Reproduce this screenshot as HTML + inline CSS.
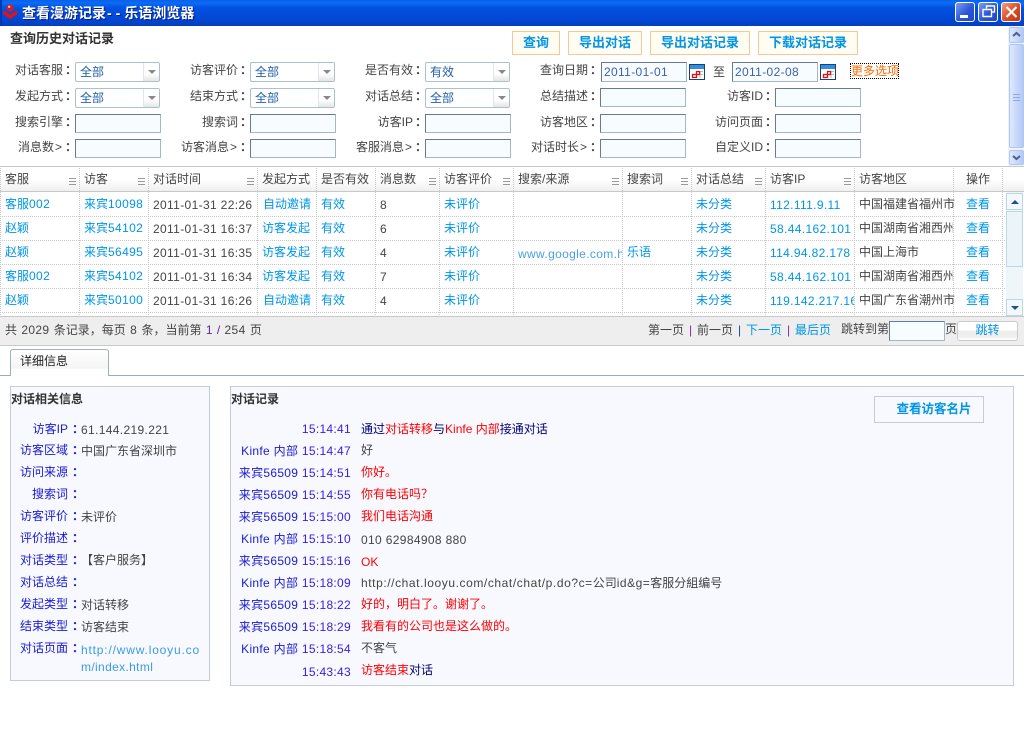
<!DOCTYPE html>
<html lang="zh-CN"><head><meta charset="utf-8"><title>查看漫游记录--乐语浏览器</title>
<style>
html,body{margin:0;padding:0;background:#fff}
#p{position:relative;width:1024px;height:738px;overflow:hidden;background:#fff;font:12px/16px "Liberation Sans","WenQuanYi Zen Hei","Noto Sans CJK SC",sans-serif;color:#444}
#p div,#p span.a{position:absolute}
.t{white-space:nowrap;height:16px}
.r{text-align:right}
.n{letter-spacing:.35px}
.l{color:#0095e6}
.d{color:#444}
.bl{color:#1a1ad0}
.tm{color:#3a1ae0;letter-spacing:.3px}
.red{color:#f00}
.nv{color:#00007a}
.h{color:#444}
.c{display:inline-block;width:9px;text-indent:2px;text-align:left;font-weight:bold}
.c2{display:inline-block;width:9px;text-indent:4px;text-align:left;font-weight:bold}
.g{display:inline-block;width:9px;text-align:center}
.sel{width:83px;height:18px;border:1px solid #a9c3c9;border-radius:2px;background:#fff}
.sel i{position:absolute;left:4px;top:1px;font-style:normal;color:#1f5fa8;line-height:16px}
.sel b{position:absolute;right:0;top:0;width:15px;height:18px;border-left:1px solid #dde6e8;background:linear-gradient(#fff,#fff 60%,#e4e4e4)}
.sel b:after{content:"";position:absolute;left:4px;top:7px;border:4px solid transparent;border-top:4px solid #888;border-bottom:0}
.in{width:84px;height:17px;border:1px solid #8f9cb4;border-color:#68789a #a5b5ca #a5b5ca #68789a;background:#f7fdff;color:#3d5fb0;line-height:17px;text-indent:2px;letter-spacing:.35px}
.bt{height:22px;border:1px solid #fbc79a;background:#fffdf2;color:#0095e6;font-weight:bold;font-size:13px;line-height:22px;text-align:center;white-space:nowrap}
.v{width:1px;top:166px;height:150px;background:repeating-linear-gradient(#c8c8c8 0 1px,transparent 1px 2px)}
.hr{left:0;width:1006px;height:1px;background:repeating-linear-gradient(90deg,#c8c8c8 0 1px,transparent 1px 2px)}
.m{width:7px;height:5px;top:178px;border-top:1px solid #999;border-bottom:1px solid #999}
.m:after{content:"";position:absolute;left:0;top:2px;width:7px;height:1px;background:#999}
.wb{top:2px;width:18px;height:18px;border:1px solid #fff;border-radius:3px;background:linear-gradient(135deg,#7f9cf0,#2a56d8 55%,#2347c4)}
.sb{border:1px solid #b0c6f2;background:linear-gradient(90deg,#dfe8fd,#b4c9f8);border-radius:2px}
</style></head><body><div id="p">

<!-- title bar -->
<div style="left:0;top:0;width:1024px;height:26px;background:linear-gradient(#0a5fe8,#0a6cf6 12%,#0352e0 30%,#0348d6 70%,#0340c0)"></div>
<div style="left:0;top:0;width:2px;height:26px;background:#0338b0"></div>
<svg style="position:absolute;left:2px;top:2px" width="18" height="19" viewBox="0 0 18 19"><circle cx="8" cy="6" r="3.6" fill="#e01818"/><circle cx="7.2" cy="4.8" r="1.2" fill="#ffc0c0"/><path d="M1.5 10 L8.2 15 L15 10" fill="none" stroke="#e81010" stroke-width="3.4"/></svg>
<div class="t" style="left:22px;top:5px;color:#fff;font-weight:bold;font-size:14px;text-shadow:1px 1px 0 #02208a">查看漫游记录<span style="letter-spacing:4px;margin-left:1px">--</span>乐语浏览器</div>
<div class="wb" style="left:955px"><div style="left:4px;top:12px;width:8px;height:3px;background:#fff"></div></div>
<div class="wb" style="left:978px"><svg style="position:absolute;left:3px;top:2px" width="14" height="13" viewBox="0 0 14 13"><path d="M4.5 3.5V1H12.5V7H10M1 4.5H9.5V11.5H1Z" fill="none" stroke="#fff" stroke-width="1.4"/></svg></div>
<div class="wb" style="left:1001px;background:linear-gradient(135deg,#f0a080,#dc4c20 55%,#c03810)"><svg style="position:absolute;left:3px;top:3px" width="13" height="12" viewBox="0 0 13 12"><path d="M1.5 1L11.5 11M11.5 1L1.5 11" stroke="#fff" stroke-width="2.2"/></svg></div>

<!-- top form -->
<div class="t" style="left:10px;top:31px;font-weight:bold;font-size:13px;color:#333">查询历史对话记录</div>
<div class="bt" style="left:512px;top:31px;width:46px">查询</div>
<div class="bt" style="left:568px;top:31px;width:72px">导出对话</div>
<div class="bt" style="left:650px;top:31px;width:98px">导出对话记录</div>
<div class="bt" style="left:758px;top:31px;width:98px">下载对话记录</div>

<!-- form scrollbar -->
<div style="left:1008px;top:26px;width:16px;height:140px;background:#eef3fd"></div>
<div class="sb" style="left:1009px;top:27px;width:13px;height:14px"><svg style="position:absolute;left:2px;top:3px" width="9" height="7"><path d="M1 5L4.5 2L8 5" fill="none" stroke="#4d6185" stroke-width="2"/></svg></div>
<div class="sb" style="left:1009px;top:44px;width:13px;height:102px"><div style="left:3px;top:49px;width:7px;height:5px;border-top:1px solid #8ea8e0;border-bottom:1px solid #8ea8e0"></div><div style="left:3px;top:52px;width:7px;height:1px;background:#8ea8e0"></div></div>
<div class="sb" style="left:1009px;top:150px;width:13px;height:13px"><svg style="position:absolute;left:2px;top:3px" width="9" height="7"><path d="M1 2L4.5 5L8 2" fill="none" stroke="#4d6185" stroke-width="2"/></svg></div>

<!-- labels col 1 -->
<div class="t r" style="left:0;width:72px;top:62px">对话客服<span class="c">：</span></div>
<div class="t r" style="left:0;width:72px;top:88px">发起方式<span class="c">：</span></div>
<div class="t r" style="left:0;width:72px;top:114px">搜索引擎<span class="c">：</span></div>
<div class="t r" style="left:0;width:72px;top:139px">消息数<span class="g">&gt;</span><span class="c">：</span></div>
<div class="sel" style="left:75px;top:62px"><i>全部</i><b></b></div>
<div class="sel" style="left:75px;top:88px"><i>全部</i><b></b></div>
<div class="in" style="left:75px;top:114px"></div>
<div class="in" style="left:75px;top:139px"></div>
<!-- col 2 -->
<div class="t r" style="left:150px;width:97px;top:62px">访客评价<span class="c">：</span></div>
<div class="t r" style="left:150px;width:97px;top:88px">结束方式<span class="c">：</span></div>
<div class="t r" style="left:150px;width:97px;top:114px">搜索词<span class="c">：</span></div>
<div class="t r" style="left:150px;width:97px;top:139px">访客消息<span class="g">&gt;</span><span class="c">：</span></div>
<div class="sel" style="left:250px;top:62px"><i>全部</i><b></b></div>
<div class="sel" style="left:250px;top:88px"><i>全部</i><b></b></div>
<div class="in" style="left:250px;top:114px"></div>
<div class="in" style="left:250px;top:139px"></div>
<!-- col 3 -->
<div class="t r" style="left:325px;width:97px;top:62px">是否有效<span class="c">：</span></div>
<div class="t r" style="left:325px;width:97px;top:88px">对话总结<span class="c">：</span></div>
<div class="t r" style="left:325px;width:97px;top:114px">访客IP<span class="c">：</span></div>
<div class="t r" style="left:325px;width:97px;top:139px">客服消息<span class="g">&gt;</span><span class="c">：</span></div>
<div class="sel" style="left:425px;top:62px"><i>有效</i><b></b></div>
<div class="sel" style="left:425px;top:88px"><i>全部</i><b></b></div>
<div class="in" style="left:425px;top:114px"></div>
<div class="in" style="left:425px;top:139px"></div>
<!-- col 4 -->
<div class="t r" style="left:500px;width:97px;top:62px">查询日期<span class="c">：</span></div>
<div class="t r" style="left:500px;width:97px;top:88px">总结描述<span class="c">：</span></div>
<div class="t r" style="left:500px;width:97px;top:114px">访客地区<span class="c">：</span></div>
<div class="t r" style="left:500px;width:97px;top:139px">对话时长<span class="g">&gt;</span><span class="c">：</span></div>
<div class="in" style="left:601px;top:62px;height:18px;line-height:19px">2011-01-01</div>
<div class="in" style="left:600px;top:88px"></div>
<div class="in" style="left:600px;top:114px"></div>
<div class="in" style="left:600px;top:139px"></div>
<svg style="position:absolute;left:689px;top:64px" width="16" height="16" viewBox="0 0 16 16"><rect x=".5" y=".5" width="15" height="15" fill="#fff" stroke="#1c3f78"/><rect x="1" y="1" width="14" height="4" fill="#2f8fe0"/><path d="M7 7.5H14M7 10.5H14M11 7V14" stroke="#bbb" fill="none"/><path d="M7.5 7.5H10.5V10.5H7.5ZM3.5 10.5H7.5V13.5H3.5Z" fill="none" stroke="#e01010" stroke-width="1.3"/></svg>
<div class="t" style="left:713px;top:64px">至</div>
<div class="in" style="left:732px;top:62px;height:18px;line-height:19px">2011-02-08</div>
<svg style="position:absolute;left:820px;top:64px" width="16" height="16" viewBox="0 0 16 16"><rect x=".5" y=".5" width="15" height="15" fill="#fff" stroke="#1c3f78"/><rect x="1" y="1" width="14" height="4" fill="#2f8fe0"/><path d="M7 7.5H14M7 10.5H14M11 7V14" stroke="#bbb" fill="none"/><path d="M7.5 7.5H10.5V10.5H7.5ZM3.5 10.5H7.5V13.5H3.5Z" fill="none" stroke="#e01010" stroke-width="1.3"/></svg>
<div class="t" style="left:850px;top:63px;width:47px;height:14px;line-height:14px;border:1px dotted #000;color:#ff6a00">更多选项</div>
<!-- col 5 -->
<div class="t r" style="left:675px;width:97px;top:88px">访客ID<span class="c">：</span></div>
<div class="t r" style="left:675px;width:97px;top:114px">访问页面<span class="c">：</span></div>
<div class="t r" style="left:675px;width:97px;top:139px">自定义ID<span class="c">：</span></div>
<div class="in" style="left:775px;top:88px"></div>
<div class="in" style="left:775px;top:114px"></div>
<div class="in" style="left:775px;top:139px"></div>

<!-- grid header -->
<div style="left:0;top:166px;width:1024px;height:24px;background:linear-gradient(#fff,#fff 50%,#f0f0f0);border-top:1px solid #c8c8c8;border-bottom:1px solid #c8c8c8"></div>
<div class="t h" style="left:5px;top:171px">客服</div>
<div class="t h" style="left:84px;top:171px">访客</div>
<div class="t h" style="left:153px;top:171px">对话时间</div>
<div class="t h" style="left:262px;top:171px">发起方式</div>
<div class="t h" style="left:321px;top:171px">是否有效</div>
<div class="t h" style="left:380px;top:171px">消息数</div>
<div class="t h" style="left:444px;top:171px">访客评价</div>
<div class="t h" style="left:518px;top:171px">搜索/来源</div>
<div class="t h" style="left:627px;top:171px">搜索词</div>
<div class="t h" style="left:696px;top:171px">对话总结</div>
<div class="t h" style="left:770px;top:171px">访客IP</div>
<div class="t h" style="left:859px;top:171px">访客地区</div>
<div class="t h" style="left:966px;top:171px">操作</div>
<div class="m" style="left:69px"></div><div class="m" style="left:138px"></div><div class="m" style="left:247px"></div><div class="m" style="left:429px"></div><div class="m" style="left:503px"></div><div class="m" style="left:612px"></div><div class="m" style="left:681px"></div><div class="m" style="left:755px"></div><div class="m" style="left:844px"></div>

<!-- grid lines -->
<div class="v" style="left:0"></div><div class="v" style="left:79px"></div><div class="v" style="left:148px"></div><div class="v" style="left:257px"></div><div class="v" style="left:316px"></div><div class="v" style="left:375px"></div><div class="v" style="left:439px"></div><div class="v" style="left:513px"></div><div class="v" style="left:622px"></div><div class="v" style="left:691px"></div><div class="v" style="left:765px"></div><div class="v" style="left:854px"></div><div class="v" style="left:953px"></div><div class="v" style="left:1002px"></div>
<div class="hr" style="top:216px"></div><div class="hr" style="top:240px"></div><div class="hr" style="top:264px"></div><div class="hr" style="top:288px"></div><div class="hr" style="top:312px"></div>

<!-- row 1 -->
<div class="t l" style="left:5px;top:196px">客服<span class="n">002</span></div>
<div class="t l" style="left:84px;top:196px">来宾<span class="n">10098</span></div>
<div class="t d n" style="left:153px;top:197px">2011-01-31 22:26</div>
<div class="t l" style="left:263px;top:196px">自动邀请</div>
<div class="t l" style="left:321px;top:196px">有效</div>
<div class="t d" style="left:380px;top:197px">8</div>
<div class="t l" style="left:444px;top:196px">未评价</div>
<div class="t l" style="left:696px;top:196px">未分类</div>
<div class="t l n" style="left:770px;top:197px">112.111.9.11</div>
<div class="t d" style="left:859px;top:196px">中国福建省福州市</div>
<div class="t l" style="left:966px;top:196px">查看</div>
<!-- row 2 -->
<div class="t l" style="left:5px;top:220px">赵颖</div>
<div class="t l" style="left:84px;top:220px">来宾<span class="n">54102</span></div>
<div class="t d n" style="left:153px;top:221px">2011-01-31 16:37</div>
<div class="t l" style="left:262px;top:220px">访客发起</div>
<div class="t l" style="left:321px;top:220px">有效</div>
<div class="t d" style="left:380px;top:221px">6</div>
<div class="t l" style="left:444px;top:220px">未评价</div>
<div class="t l" style="left:696px;top:220px">未分类</div>
<div class="t l n" style="left:770px;top:221px">58.44.162.101</div>
<div class="t d" style="left:859px;top:220px;width:94px;overflow:hidden">中国湖南省湘西州</div>
<div class="t l" style="left:966px;top:220px">查看</div>
<!-- row 3 -->
<div class="t l" style="left:5px;top:244px">赵颖</div>
<div class="t l" style="left:84px;top:244px">来宾<span class="n">56495</span></div>
<div class="t d n" style="left:153px;top:245px">2011-01-31 16:35</div>
<div class="t l" style="left:262px;top:244px">访客发起</div>
<div class="t l" style="left:321px;top:244px">有效</div>
<div class="t d" style="left:380px;top:245px">4</div>
<div class="t l" style="left:444px;top:244px">未评价</div>
<div class="t l n" style="left:518px;top:246px;width:104px;overflow:hidden;color:#4a9fe8">www.google.com.hk</div>
<div class="t l" style="left:627px;top:244px">乐语</div>
<div class="t l" style="left:696px;top:244px">未分类</div>
<div class="t l n" style="left:770px;top:245px">114.94.82.178</div>
<div class="t d" style="left:859px;top:244px">中国上海市</div>
<div class="t l" style="left:966px;top:244px">查看</div>
<!-- row 4 -->
<div class="t l" style="left:5px;top:268px">客服<span class="n">002</span></div>
<div class="t l" style="left:84px;top:268px">来宾<span class="n">54102</span></div>
<div class="t d n" style="left:153px;top:269px">2011-01-31 16:34</div>
<div class="t l" style="left:262px;top:268px">访客发起</div>
<div class="t l" style="left:321px;top:268px">有效</div>
<div class="t d" style="left:380px;top:269px">7</div>
<div class="t l" style="left:444px;top:268px">未评价</div>
<div class="t l" style="left:696px;top:268px">未分类</div>
<div class="t l n" style="left:770px;top:269px">58.44.162.101</div>
<div class="t d" style="left:859px;top:268px;width:94px;overflow:hidden">中国湖南省湘西州</div>
<div class="t l" style="left:966px;top:268px">查看</div>
<!-- row 5 -->
<div class="t l" style="left:5px;top:292px">赵颖</div>
<div class="t l" style="left:84px;top:292px">来宾<span class="n">50100</span></div>
<div class="t d n" style="left:153px;top:293px">2011-01-31 16:26</div>
<div class="t l" style="left:263px;top:292px">自动邀请</div>
<div class="t l" style="left:321px;top:292px">有效</div>
<div class="t d" style="left:380px;top:293px">4</div>
<div class="t l" style="left:444px;top:292px">未评价</div>
<div class="t l" style="left:696px;top:292px">未分类</div>
<div class="t l n" style="left:770px;top:293px;width:84px;overflow:hidden">119.142.217.163</div>
<div class="t d" style="left:859px;top:292px">中国广东省潮州市</div>
<div class="t l" style="left:966px;top:292px">查看</div>

<!-- grid scrollbar -->
<div style="left:1006px;top:192px;width:17px;height:124px;background:#eef6fa"></div>
<div style="left:1006px;top:193px;width:15px;height:15px;border:1px solid #bcd6e6;background:#f2f8fb"><div style="left:4px;top:6px;border:4px solid transparent;border-bottom:4px solid #1f4f90;border-top:0"></div></div>
<div style="left:1006px;top:211px;width:15px;height:54px;border:1px solid #bcd6e6;background:#eaf4f9"></div>
<div style="left:1006px;top:299px;width:15px;height:15px;border:1px solid #bcd6e6;background:#f2f8fb"><div style="left:4px;top:6px;border:4px solid transparent;border-top:4px solid #1f4f90;border-bottom:0"></div></div>

<!-- footer -->
<div style="left:0;top:316px;width:1024px;height:28px;background:#eee;border-top:1px solid #c8c8c8;border-bottom:1px solid #c8c8c8"></div>
<div class="t" style="left:5px;top:322px;word-spacing:1px">共 <span class="n">2029</span> 条记录，每页 <span class="n">8</span> 条，当前第 <span style="color:#5a2a9a">1 /</span> <span class="n">254</span> 页</div>
<div class="t" style="left:648px;top:322px">第一页</div>
<div class="t" style="left:689px;top:322px;color:#8a2a9a">|</div>
<div class="t" style="left:697px;top:322px">前一页</div>
<div class="t" style="left:738px;top:322px;color:#1a4a9a">|</div>
<div class="t l" style="left:746px;top:322px">下一页</div>
<div class="t" style="left:787px;top:322px;color:#8a2a9a">|</div>
<div class="t l" style="left:795px;top:322px">最后页</div>
<div class="t" style="left:841px;top:321px">跳转到第</div>
<div class="in" style="left:889px;top:321px;width:54px;height:18px"></div>
<div class="t" style="left:945px;top:321px">页</div>
<div class="t l" style="left:957px;top:321px;width:59px;height:18px;line-height:17px;text-align:center;border:1px solid #c8ccd0;border-radius:3px;background:linear-gradient(#fff,#fff 45%,#eee 50%,#eee 80%,#fff)">跳转</div>

<!-- tab -->
<div style="left:0;top:375px;width:1024px;height:1px;background:#9fa8c0"></div>
<div style="left:10px;top:349px;width:97px;height:26px;border:1px solid #9fb0c4;border-bottom:0;border-radius:3px 3px 0 0;background:linear-gradient(#fff,#f4f4f4 70%,#fff 75%)"></div>
<div class="t" style="left:20px;top:353px;color:#222">详细信息</div>

<!-- left panel -->
<div style="left:10px;top:386px;width:198px;height:293px;background:#f8f9ff;border:1px solid #c6cbdb"></div>
<div class="t" style="left:11px;top:391px;font-weight:bold;color:#333">对话相关信息</div>
<div class="t r bl" style="left:10px;width:67px;top:421px">访客IP<span class="c2">：</span></div><div class="t n" style="left:81px;top:422px">61.144.219.221</div>
<div class="t r bl" style="left:10px;width:67px;top:442px">访客区域<span class="c2">：</span></div><div class="t" style="left:81px;top:443px">中国广东省深圳市</div>
<div class="t r bl" style="left:10px;width:67px;top:464px">访问来源<span class="c2">：</span></div>
<div class="t r bl" style="left:10px;width:67px;top:486px">搜索词<span class="c2">：</span></div>
<div class="t r bl" style="left:10px;width:67px;top:508px">访客评价<span class="c2">：</span></div><div class="t" style="left:81px;top:509px">未评价</div>
<div class="t r bl" style="left:10px;width:67px;top:530px">评价描述<span class="c2">：</span></div>
<div class="t r bl" style="left:10px;width:67px;top:552px">对话类型<span class="c2">：</span></div><div class="t" style="left:81px;top:552px">【客户服务】</div>
<div class="t r bl" style="left:10px;width:67px;top:574px">对话总结<span class="c2">：</span></div>
<div class="t r bl" style="left:10px;width:67px;top:596px">发起类型<span class="c2">：</span></div><div class="t" style="left:81px;top:597px">对话转移</div>
<div class="t r bl" style="left:10px;width:67px;top:618px">结束类型<span class="c2">：</span></div><div class="t" style="left:81px;top:619px">访客结束</div>
<div class="t r bl" style="left:10px;width:67px;top:640px">对话页面<span class="c2">：</span></div>
<div class="t" style="left:81px;top:642px;color:#3a9ae8;letter-spacing:.82px">http://www.looyu.co</div>
<div class="t n" style="left:81px;top:659px;color:#3a9ae8">m/index.html</div>

<!-- right panel -->
<div style="left:230px;top:386px;width:782px;height:298px;background:#f8f9ff;border:1px solid #c6cbdb"></div>
<div class="t" style="left:231px;top:391px;font-weight:bold;color:#333">对话记录</div>
<div class="t" style="left:874px;top:396px;width:108px;height:25px;line-height:24px;border:1px solid #c6cbdb;text-align:center;text-indent:10px;font-weight:bold;font-size:12.5px;color:#0095e6">查看访客名片</div>

<div class="t r tm" style="left:232px;width:119px;top:421px">15:14:41</div>
<div class="t nv" style="left:361px;top:421px">通过<span class="red">对话转移</span>与<span class="red">Kinfe 内部</span>接通对话</div>
<div class="t r tm" style="left:232px;width:119px;top:443px"><span class="bl">Kinfe 内部</span> 15:14:47</div>
<div class="t" style="left:361px;top:442px">好</div>
<div class="t r tm" style="left:232px;width:119px;top:465px"><span class="bl">来宾56509</span> 15:14:51</div>
<div class="t red" style="left:361px;top:464px">你好。</div>
<div class="t r tm" style="left:232px;width:119px;top:487px"><span class="bl">来宾56509</span> 15:14:55</div>
<div class="t red" style="left:361px;top:486px">你有电话吗？</div>
<div class="t r tm" style="left:232px;width:119px;top:509px"><span class="bl">来宾56509</span> 15:15:00</div>
<div class="t red" style="left:361px;top:508px">我们电话沟通</div>
<div class="t r tm" style="left:232px;width:119px;top:531px"><span class="bl">Kinfe 内部</span> 15:15:10</div>
<div class="t n" style="left:361px;top:532px">010 62984908 880</div>
<div class="t r tm" style="left:232px;width:119px;top:553px"><span class="bl">来宾56509</span> 15:15:16</div>
<div class="t red" style="left:361px;top:554px">OK</div>
<div class="t r tm" style="left:232px;width:119px;top:575px"><span class="bl">Kinfe 内部</span> 15:18:09</div>
<div class="t" style="left:361px;top:575px"><span style="letter-spacing:.58px">http://chat.looyu.com/chat/chat/p.do?c=</span>公司<span style="letter-spacing:.5px">id&amp;g=</span>客服分組编号</div>
<div class="t r tm" style="left:232px;width:119px;top:597px"><span class="bl">来宾56509</span> 15:18:22</div>
<div class="t red" style="left:361px;top:596px">好的，明白了。谢谢了。</div>
<div class="t r tm" style="left:232px;width:119px;top:619px"><span class="bl">来宾56509</span> 15:18:29</div>
<div class="t red" style="left:361px;top:618px">我看有的公司也是这么做的。</div>
<div class="t r tm" style="left:232px;width:119px;top:641px"><span class="bl">Kinfe 内部</span> 15:18:54</div>
<div class="t" style="left:361px;top:640px">不客气</div>
<div class="t r tm" style="left:232px;width:119px;top:664px">15:43:43</div>
<div class="t nv" style="left:361px;top:662px"><span class="red">访客结束</span>对话</div>

</div></body></html>
